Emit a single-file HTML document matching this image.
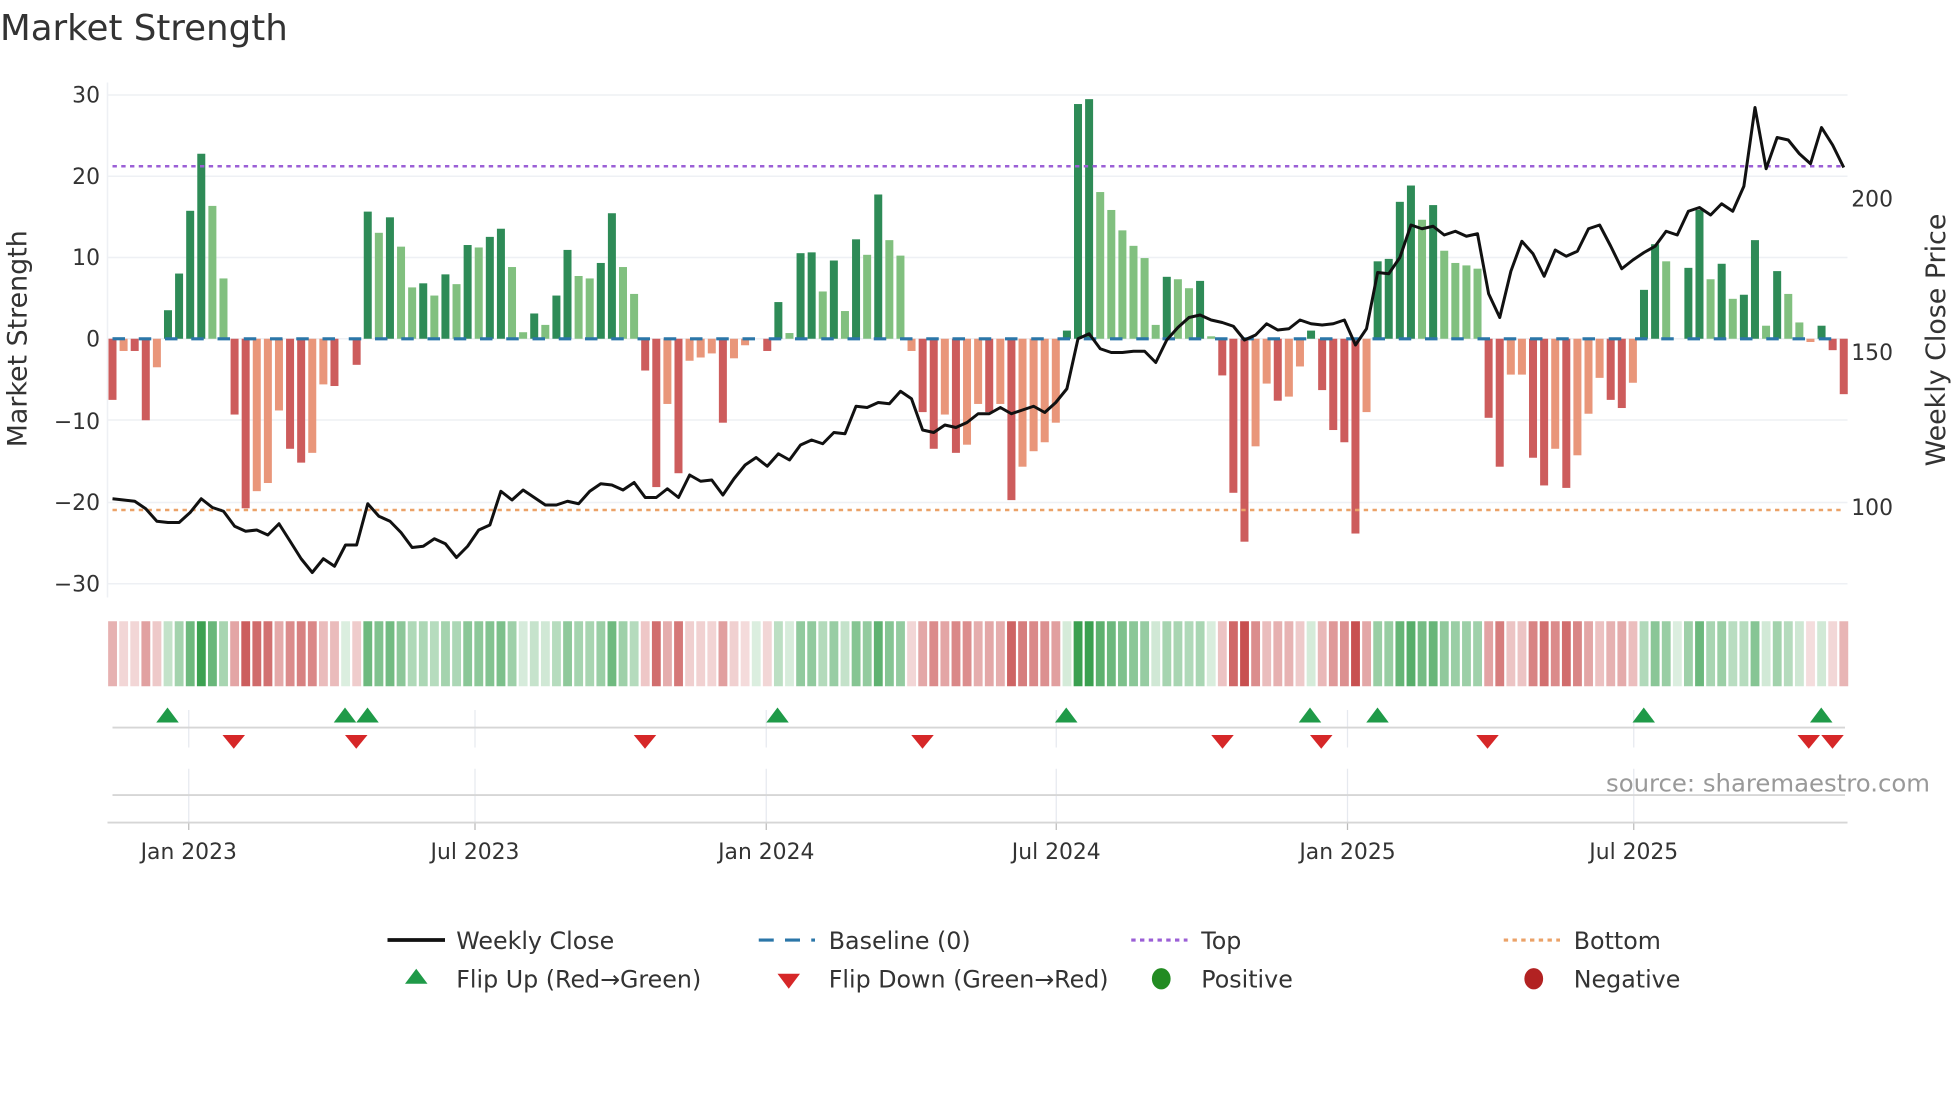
<!DOCTYPE html>
<html><head><meta charset="utf-8"><style>
html,body{margin:0;padding:0;background:#fff;width:1960px;height:1102px;overflow:hidden}
svg text{font-family:"DejaVu Sans","Liberation Sans",sans-serif;fill:#333}
</style></head><body>
<svg id="s" width="1960" height="1102" viewBox="0 0 1568 881.6" xmlns="http://www.w3.org/2000/svg">
<text x="0" y="32" font-size="28.5">Market Strength</text>
<g id="grid" stroke="#eef0f4" stroke-width="1.2"></g>
<line x1="86" y1="66" x2="86" y2="478" stroke="#eef0f4" stroke-width="1.2"/>
<g font-size="17.5" text-anchor="end">
<text x="80" y="82">30</text><text x="80" y="147">20</text><text x="80" y="212">10</text><text x="80" y="277">0</text>
<text x="80" y="343">−10</text><text x="80" y="408">−20</text><text x="80" y="473">−30</text>
</g>
<g font-size="17.5">
<text x="1481" y="165">200</text><text x="1481" y="288">150</text><text x="1481" y="412">100</text>
</g>
<text transform="translate(21,271) rotate(-90)" font-size="21.5" text-anchor="middle">Market Strength</text>
<text transform="translate(1556,272) rotate(-90)" font-size="21.5" text-anchor="middle">Weekly Close Price</text>
<g id="bars"></g>
<line x1="90" y1="271" x2="1476" y2="271" stroke="#2b76a8" stroke-width="2.5" stroke-dasharray="10 11"/>
<line x1="90" y1="133" x2="1476" y2="133" stroke="#9b5fd6" stroke-width="2" stroke-dasharray="3.5 3.5"/>
<line x1="90" y1="408" x2="1476" y2="408" stroke="#eba268" stroke-width="2" stroke-dasharray="3.5 3.5"/>
<path id="price" fill="none" stroke="#111" stroke-width="2.4" stroke-linejoin="round"/>
<g id="heat"></g>
<g id="vg" stroke="#e6e9ef" stroke-width="1"></g>
<line x1="90" y1="582" x2="1476" y2="582" stroke="#d6d6d6" stroke-width="1.5"/>
<line x1="90" y1="636" x2="1476" y2="636" stroke="#d6d6d6" stroke-width="1.5"/>
<line x1="86" y1="658" x2="1478" y2="658" stroke="#d6d6d6" stroke-width="1.5"/>
<g id="tri"></g>
<text x="1544" y="633" font-size="19.5" text-anchor="end" style="fill:#999">source: sharemaestro.com</text>
<g font-size="17.5" text-anchor="middle">
<text x="151" y="687">Jan 2023</text><text x="380" y="687">Jul 2023</text><text x="613" y="687">Jan 2024</text>
<text x="845" y="687">Jul 2024</text><text x="1078" y="687">Jan 2025</text><text x="1307" y="687">Jul 2025</text>
</g>
<g font-size="19">
<line x1="310" y1="752" x2="356" y2="752" stroke="#111" stroke-width="3"/>
<text x="365" y="759">Weekly Close</text>
<line x1="607" y1="752" x2="652" y2="752" stroke="#2b76a8" stroke-width="2.5" stroke-dasharray="12 9"/>
<text x="663" y="759">Baseline (0)</text>
<line x1="905" y1="752" x2="950" y2="752" stroke="#9b5fd6" stroke-width="2.5" stroke-dasharray="3.5 3.5"/>
<text x="961" y="759">Top</text>
<line x1="1203" y1="752" x2="1248" y2="752" stroke="#eba268" stroke-width="2.5" stroke-dasharray="3.5 3.5"/>
<text x="1259" y="759">Bottom</text>
<polygon points="333,775 342,787 324,787" fill="#1f9a48"/>
<text x="365" y="790">Flip Up (Red→Green)</text>
<polygon points="622,779 640,779 631,791" fill="#d62728"/>
<text x="663" y="790">Flip Down (Green→Red)</text>
<ellipse cx="929" cy="783" rx="7.5" ry="8.5" fill="#228b22"/>
<text x="961" y="790">Positive</text>
<ellipse cx="1227" cy="783" rx="7.5" ry="8.5" fill="#b22222"/>
<text x="1259" y="790">Negative</text>
</g>
</svg>
<script>
var NS="http://www.w3.org/2000/svg";
function el(p,t,a){var e=document.createElementNS(NS,t);for(var k in a)e.setAttribute(k,a[k]);document.getElementById(p).appendChild(e);return e;}
[76,141,206,271,336,402,467].forEach(function(y){el("grid","line",{x1:86,x2:1478,y1:y,y2:y});});
var v=[[-7.5,1],[-1.5,0],[-1.5,1],[-10,1],[-3.5,0],[3.5,1],[8,1],[15.7,1],[22.7,1],[16.3,0],[7.4,0],[-9.3,1],[-20.8,1],[-18.7,0],[-17.7,0],[-8.8,0],[-13.5,1],[-15.2,1],[-14,0],[-5.6,0],[-5.8,1],[0,0],[-3.2,1],[15.6,1],[13,0],[14.9,1],[11.3,0],[6.3,0],[6.8,1],[5.3,0],[7.9,1],[6.7,0],[11.5,1],[11.2,0],[12.5,1],[13.5,1],[8.8,0],[0.8,0],[3.1,1],[1.7,0],[5.3,1],[10.9,1],[7.7,0],[7.4,0],[9.3,1],[15.4,1],[8.8,0],[5.5,0],[-3.9,1],[-18.2,1],[-8,0],[-16.5,1],[-2.7,0],[-2.3,0],[-1.8,0],[-10.3,1],[-2.4,0],[-0.8,0],[0,0],[-1.5,1],[4.5,1],[0.7,0],[10.5,1],[10.6,1],[5.8,0],[9.6,1],[3.4,0],[12.2,1],[10.3,0],[17.7,1],[12.1,0],[10.2,0],[-1.5,0],[-9,1],[-13.5,1],[-9.3,0],[-14,1],[-13,0],[-8,0],[-9,1],[-8,0],[-19.8,1],[-15.7,0],[-13.8,0],[-12.7,0],[-10.3,0],[1,1],[28.8,1],[29.4,1],[18,0],[15.8,0],[13.3,0],[11.4,0],[9.9,0],[1.7,0],[7.6,1],[7.3,0],[6.2,0],[7.1,1],[0.3,0],[-4.5,1],[-18.9,1],[-24.9,1],[-13.2,0],[-5.5,0],[-7.6,1],[-7.1,0],[-3.4,0],[1,1],[-6.3,1],[-11.2,1],[-12.7,1],[-23.9,1],[-9,0],[9.5,1],[9.8,1],[16.8,1],[18.8,1],[14.6,0],[16.4,1],[10.8,0],[9.3,0],[9,0],[8.6,0],[-9.7,1],[-15.7,1],[-4.4,0],[-4.4,0],[-14.6,1],[-18,1],[-13.5,0],[-18.3,1],[-14.3,0],[-9.2,0],[-4.8,0],[-7.5,1],[-8.5,1],[-5.4,0],[6,1],[11.6,1],[9.5,0],[0,0],[8.7,1],[15.8,1],[7.3,0],[9.2,1],[4.9,0],[5.4,1],[12.1,1],[1.6,0],[8.3,1],[5.5,0],[2,0],[-0.4,0],[1.6,1],[-1.4,1],[-6.8,1]];
var n=v.length,x0=90,dx=(1475-90)/(n-1);
v.forEach(function(d,i){var x=x0+i*dx,val=d[0],h=Math.abs(val)*6.52;
 var c=val>=0?(d[1]?"#2e8b57":"#81c07f"):(d[1]?"#cd5c5c":"#e9967a");
 if(h>0)el("bars","rect",{x:x-3.2,y:val>=0?271-h:271,width:6.4,height:h,fill:c});
 var a=Math.min(1,0.18+Math.abs(val)/28);
 var hc=val>=0?"rgba(58,160,80,"+a+")":"rgba(200,80,80,"+a+")";
 el("heat","rect",{x:x-4.4+0.9,y:497,width:dx-1.8,height:52,fill:hc});
});
var p=[399,400,401,407,417,418,418,410,399,406,409,421,425,424,428,419,433,447,458,447,453,436,436,403,413,417,426,438,437,431,435,446,437,424,420,393,400,392,398,404,404,401,403,393,387,388,392,386,398,398,391,398,380,385,384,396,383,372,366,373,363,368,356,352,355,346,347,325,326,322,323,313,319,344,346,340,342,338,331,331,326,331,328,325,330,322,311,271,267,279,282,282,281,281,290,272,262,254,252,256,258,261,272,268,259,264,263,256,259,260,259,256,276,263,218,219,206,180,183,181,188,185,189,187,235,254,217,193,203,221,200,205,201,183,180,197,215,208,202,197,185,188,169,166,172,163,169,149,86,135,110,112,123,131,102,116,134];
var dp=(1475-90)/(p.length-1),s="";
p.forEach(function(y,i){s+=(i?"L":"M")+(90+i*dp).toFixed(1)+" "+y+" ";});
document.getElementById("price").setAttribute("d",s);
[151,380,613,845,1078,1307].forEach(function(x){el("vg","line",{x1:x,x2:x,y1:568,y2:598});el("vg","line",{x1:x,x2:x,y1:615,y2:658});el("vg","line",{x1:x,x2:x,y1:658,y2:664,stroke:"#bbb"});});
[134,276,294,622,853,1048,1102,1315,1457].forEach(function(x){el("tri","polygon",{points:x+",566 "+(x+9)+",578 "+(x-9)+",578",fill:"#1f9a48"});});
[187,285,516,738,978,1057,1190,1447,1466].forEach(function(x){el("tri","polygon",{points:(x-9)+",588 "+(x+9)+",588 "+x+",599",fill:"#d62728"});});
</script>
</body></html>
